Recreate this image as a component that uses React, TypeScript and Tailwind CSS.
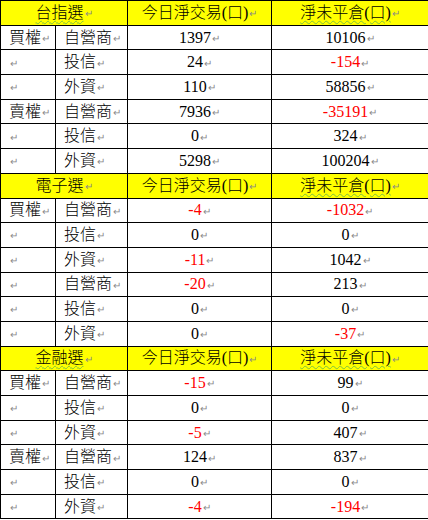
import { Fragment } from 'react';

const Mark = () => (
  <span className="ml-[1px] align-middle text-[10px] leading-none text-[#8a8a8a]">↵</span>
);

type Row = { side: string; who: string; today: number; open: number };

type Section = { title: string; wavy: boolean; rows: Row[] };

const sections: Section[] = [
  {
    title: '台指選',
    wavy: true,
    rows: [
      { side: '買權', who: '自營商', today: 1397, open: 10106 },
      { side: '', who: '投信', today: 24, open: -154 },
      { side: '', who: '外資', today: 110, open: 58856 },
      { side: '賣權', who: '自營商', today: 7936, open: -35191 },
      { side: '', who: '投信', today: 0, open: 324 },
      { side: '', who: '外資', today: 5298, open: 100204 },
    ],
  },
  {
    title: '電子選',
    wavy: false,
    rows: [
      { side: '買權', who: '自營商', today: -4, open: -1032 },
      { side: '', who: '投信', today: 0, open: 0 },
      { side: '', who: '外資', today: -11, open: 1042 },
      { side: '', who: '自營商', today: -20, open: 213 },
      { side: '', who: '投信', today: 0, open: 0 },
      { side: '', who: '外資', today: 0, open: -37 },
    ],
  },
  {
    title: '金融選',
    wavy: true,
    rows: [
      { side: '買權', who: '自營商', today: -15, open: 99 },
      { side: '', who: '投信', today: 0, open: 0 },
      { side: '', who: '外資', today: -5, open: 407 },
      { side: '賣權', who: '自營商', today: 124, open: 837 },
      { side: '', who: '投信', today: 0, open: 0 },
      { side: '', who: '外資', today: -4, open: -194 },
    ],
  },
];

const cell = 'border border-black p-0 align-middle';
const wavy = 'underline decoration-wavy decoration-[#7cc040] decoration-1 underline-offset-2';

const Num = ({ v }: { v: number }) => (
  <td className={`${cell} text-center`}>
    <span className={v < 0 ? 'text-[#ff0000]' : 'text-black'}>{v}</span>
    <Mark />
  </td>
);

export default function App() {
  return (
    <div className="h-[520px] w-[428px] bg-white">
      <table
        className="w-[428px] table-fixed border-collapse text-[16px] font-light leading-none text-black"
        style={{ fontFamily: '"Liberation Serif", "Noto Sans CJK TC", serif' }}
      >
        <colgroup>
          <col className="w-[55px]" />
          <col className="w-[72px]" />
          <col className="w-[144px]" />
          <col className="w-[157px]" />
        </colgroup>
        <tbody>
          {sections.map(s => (
            <Fragment key={s.title}>
              <tr className="h-[24.7px] bg-[#ffff00]">
                <td colSpan={2} className={`${cell} text-center`}>
                  <span className={s.wavy ? wavy : ''}>{s.title}</span>
                  <Mark />
                </td>
                <td className={`${cell} text-center`}>
                  今日淨交易(口)
                  <Mark />
                </td>
                <td className={`${cell} text-center`}>
                  <span className={wavy}>淨未平倉(口)</span>
                  <Mark />
                </td>
              </tr>
              {s.rows.map((r, i) => (
                <tr key={i} className="h-[24.7px]">
                  <td className={`${cell} pl-[8px]`}>
                    {r.side}
                    <Mark />
                  </td>
                  <td className={`${cell} pl-[8px]`}>
                    {r.who}
                    <Mark />
                  </td>
                  <Num v={r.today} />
                  <Num v={r.open} />
                </tr>
              ))}
            </Fragment>
          ))}
        </tbody>
      </table>
    </div>
  );
}
